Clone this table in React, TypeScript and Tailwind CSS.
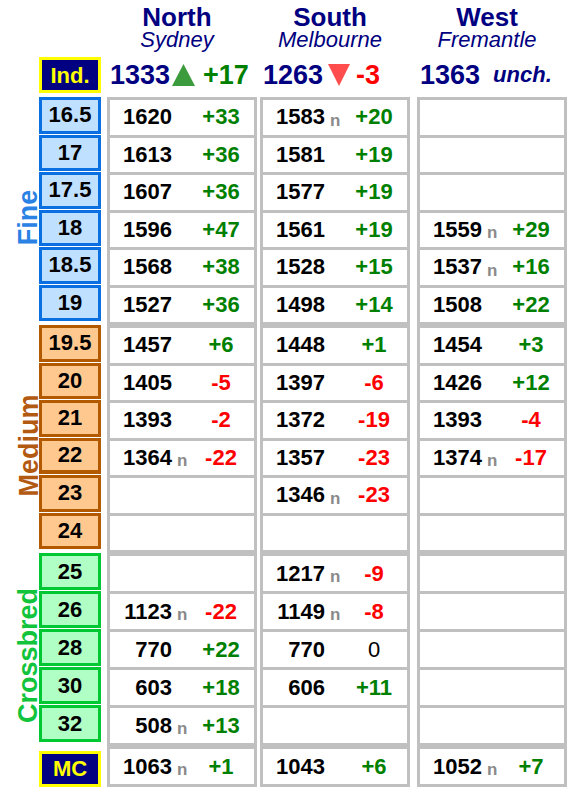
import React from "react"

type Cell = { v: string; c: string; n?: boolean } | null
type Row = { label: string; cells: Cell[]; joined?: boolean }
type Group = {
  name?: string
  nameClass?: string
  boxClass: string
  cellH: string
  boxH: string
  boxWrap?: string
  rows: Row[]
}

const c = (v: string, ch: string, n = false): Cell => ({ v, c: ch, n })

const groups: Group[] = [
  {
    name: "Fine",
    nameClass: "text-[#2a82e4]",
    boxClass: "border-[#0a6fe0] bg-[#c0e0ff] text-black",
    cellH: "h-[34.5px]",
    boxH: "h-[36.5px]",
    rows: [
      { label: "16.5", cells: [c("1620", "+33"), c("1583", "+20", true), null] },
      { label: "17", cells: [c("1613", "+36"), c("1581", "+19"), null] },
      { label: "17.5", cells: [c("1607", "+36"), c("1577", "+19"), null] },
      { label: "18", cells: [c("1596", "+47"), c("1561", "+19"), c("1559", "+29", true)] },
      { label: "18.5", cells: [c("1568", "+38"), c("1528", "+15"), c("1537", "+16", true)] },
      { label: "19", cells: [c("1527", "+36"), c("1498", "+14"), c("1508", "+22")] },
    ],
  },
  {
    name: "Medium",
    nameClass: "text-[#b35a12]",
    boxClass: "border-[#b35900] bg-[#ffc88f] text-black",
    cellH: "h-[34.5px]",
    boxH: "h-[36.5px]",
    rows: [
      { label: "19.5", cells: [c("1457", "+6"), c("1448", "+1"), c("1454", "+3")] },
      { label: "20", cells: [c("1405", "-5"), c("1397", "-6"), c("1426", "+12")] },
      { label: "21", cells: [c("1393", "-2"), c("1372", "-19"), c("1393", "-4")] },
      { label: "22", cells: [c("1364", "-22", true), c("1357", "-23"), c("1374", "-17", true)], joined: true },
      { label: "23", cells: [null, c("1346", "-23", true), null] },
      { label: "24", cells: [null, null, null] },
    ],
  },
  {
    name: "Crossbred",
    nameClass: "text-[#12c43c]",
    boxClass: "border-[#00c832] bg-[#b0ffc4] text-black",
    cellH: "h-[35px]",
    boxH: "h-[37px]",
    rows: [
      { label: "25", cells: [null, c("1217", "-9", true), null] },
      { label: "26", cells: [c("1123", "-22", true), c("1149", "-8", true), null] },
      { label: "28", cells: [c("770", "+22"), c("770", "0"), null] },
      { label: "30", cells: [c("603", "+18"), c("606", "+11"), null] },
      { label: "32", cells: [c("508", "+13", true), null, null] },
    ],
  },
  {
    boxClass: "border-[#ffff00] bg-[#000080] text-[#ffff00]",
    cellH: "h-[35px]",
    boxH: "h-[36px]",
    boxWrap: "pt-[5px]",
    rows: [{ label: "MC", cells: [c("1063", "+1", true), c("1043", "+6"), c("1052", "+7", true)] }],
  },
]

const colGap = ["ml-[6px]", "ml-[3px]", "ml-[7px]"]

function changeClass(ch: string) {
  if (ch.startsWith("+")) return "font-bold text-[#008000]"
  if (ch.startsWith("-")) return "font-bold text-[#ff0000]"
  return "font-normal text-black"
}

function DataCell({ cell, h }: { cell: Cell; h: string }) {
  return (
    <div className={`flex items-center bg-white ${h}`}>
      {cell && (
        <>
          <span className="w-[62px] text-right text-[22px] font-bold leading-none text-black">{cell.v}</span>
          <span className="w-[22px] translate-y-[3px] pl-[5px] text-[17px] font-bold leading-none text-[#8a8a8a]">
            {cell.n ? "n" : ""}
          </span>
          <span className={`w-[54px] text-center text-[22px] leading-none ${changeClass(cell.c)}`}>{cell.c}</span>
        </>
      )}
    </div>
  )
}

function TriUp() {
  return (
    <svg width="23" height="22" viewBox="0 0 23 22" className="ml-[2px]">
      <path d="M11.5 0 L23 22 L0 22 Z" fill="#3c9b3c" />
    </svg>
  )
}

function TriDown() {
  return (
    <svg width="22" height="22" viewBox="0 0 22 22" className="ml-[5px]">
      <path d="M0 0 L22 0 L11 22 Z" fill="#ff4c4c" />
    </svg>
  )
}

const regions = [
  { title: "North", city: "Sydney" },
  { title: "South", city: "Melbourne" },
  { title: "West", city: "Fremantle" },
]

export default function App() {
  return (
    <main className="w-[584px] bg-white font-['Liberation_Sans',Arial,sans-serif] text-black">
      <header className="flex pt-[6px]">
        {regions.map((r, i) => (
          <div key={r.title} className={`flex w-[150px] flex-col items-center pr-[10px] text-[#000080] ${i === 0 ? "ml-[107px]" : colGap[i]}`}>
            <span className="text-[26px] font-bold leading-[22px]">{r.title}</span>
            <span className="mt-[3px] text-[22px] italic leading-[18px]">{r.city}</span>
          </div>
        ))}
      </header>

      <div className="mt-[8px] flex h-[36px]">
        <div className="ml-[39px] flex w-[62px] items-center justify-center border-[3px] border-[#ffff00] bg-[#000080] text-[22px] font-bold text-[#ffff00]">
          Ind.
        </div>
        <div className="ml-[6px] flex w-[150px] items-center pl-[3px] text-[27px] font-bold leading-none">
          <span className="text-[#000080]">1333</span>
          <TriUp />
          <span className="ml-[8px] text-[#008000]">+17</span>
        </div>
        <div className="ml-[3px] flex w-[150px] items-center pl-[3px] text-[27px] font-bold leading-none">
          <span className="text-[#000080]">1263</span>
          <TriDown />
          <span className="ml-[6px] text-[#ff0000]">-3</span>
        </div>
        <div className="ml-[7px] flex w-[150px] items-center pl-[3px] font-bold leading-none text-[#000080]">
          <span className="text-[27px]">1363</span>
          <span className="ml-[13px] text-[22px] italic">unch.</span>
        </div>
      </div>

      <div className="mt-[4px] flex flex-col">
        {groups.map((g, gi) => (
          <div key={gi} className="flex">
            <div className="flex w-[39px] items-center justify-center">
              {g.name && (
                <span className={`shrink-0 translate-x-[9px] translate-y-[6px] -rotate-90 whitespace-nowrap text-[27px] font-bold leading-none ${g.nameClass}`}>
                  {g.name}
                </span>
              )}
            </div>
            <div className={`flex w-[62px] flex-col ${g.boxWrap ?? ""}`}>
              {g.rows.map((r, ri) => (
                <div
                  key={r.label}
                  className={`flex items-center justify-center border-[3px] text-[22px] font-bold leading-none ${g.boxClass} ${g.boxH} ${
                    ri < g.rows.length - 1 && !r.joined ? "mb-[1px]" : ""
                  } ${r.joined ? "mb-[1px] border-b-[4px]" : ""}`}
                >
                  {r.label}
                </div>
              ))}
            </div>
            {[0, 1, 2].map((ci) => (
              <div key={ci} className={`flex w-[150px] flex-col gap-[3px] bg-[#c0c0c0] p-[3px] ${colGap[ci]}`}>
                {g.rows.map((r) => (
                  <DataCell key={r.label} cell={r.cells[ci]} h={g.cellH} />
                ))}
              </div>
            ))}
          </div>
        ))}
      </div>
    </main>
  )
}
